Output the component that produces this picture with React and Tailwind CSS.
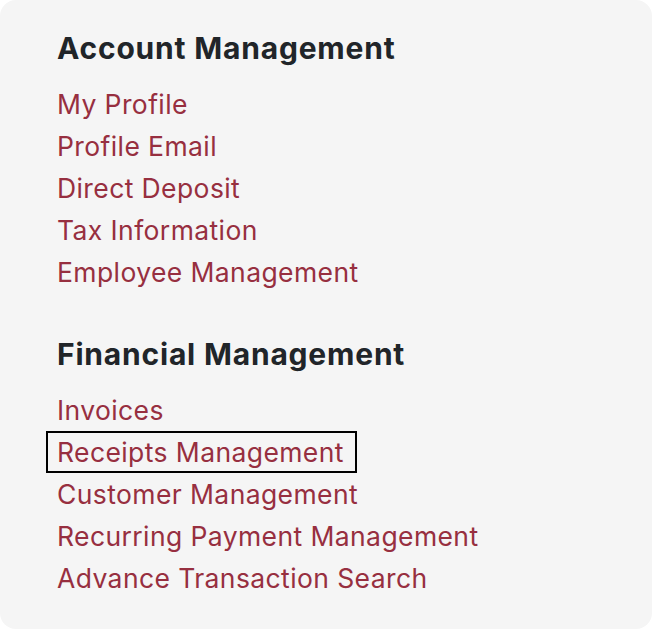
const sections = [
  {
    title: 'Account Management',
    links: ['My Profile', 'Profile Email', 'Direct Deposit', 'Tax Information', 'Employee Management'],
  },
  {
    title: 'Financial Management',
    links: ['Invoices', 'Receipts Management', 'Customer Management', 'Recurring Payment Management', 'Advance Transaction Search'],
  },
];

const focused = 'Receipts Management';

export default function App() {
  return (
    <div className="w-[652px] h-[632px] bg-white font-['Inter','Liberation_Sans',sans-serif]">
      <div className="h-[629px] bg-[#f5f5f5] rounded-2xl pl-[57px] pt-[31px]">
        {sections.map((section, i) => (
          <section key={section.title} className={i > 0 ? 'mt-[44px]' : ''}>
            <h2 className="text-[30px] leading-[34px] font-bold text-[#212529] tracking-[0.8px]">
              {section.title}
            </h2>
            <ul className="mt-[18px]">
              {section.links.map((link) => (
                <li key={link} className="h-[42px]">
                  {link === focused ? (
                    <a
                      href="#"
                      className="inline-block -ml-[11px] pl-[9px] pr-[11px] border-2 border-black text-[26.5px] leading-[38px] tracking-[0.4px] text-[#972f40]"
                    >
                      {link}
                    </a>
                  ) : (
                    <a href="#" className="inline-block text-[26.5px] leading-[42px] tracking-[0.4px] text-[#972f40]">
                      {link}
                    </a>
                  )}
                </li>
              ))}
            </ul>
          </section>
        ))}
      </div>
    </div>
  );
}
